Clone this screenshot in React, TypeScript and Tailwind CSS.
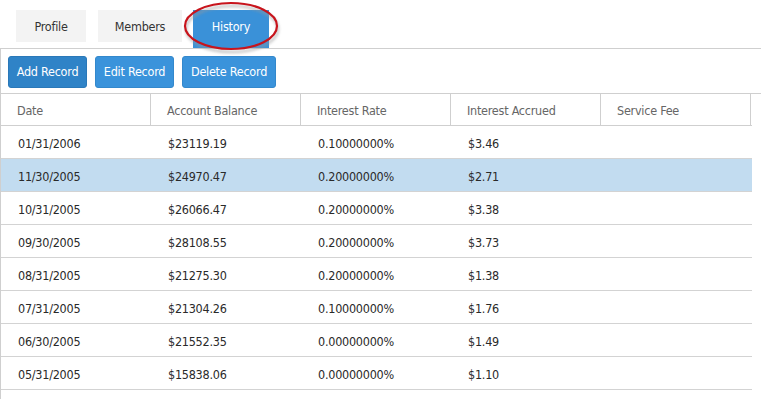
import React from "react";

const rows = [
  ["01/31/2006", "$23119.19", "0.10000000%", "$3.46"],
  ["11/30/2005", "$24970.47", "0.20000000%", "$2.71"],
  ["10/31/2005", "$26066.47", "0.20000000%", "$3.38"],
  ["09/30/2005", "$28108.55", "0.20000000%", "$3.73"],
  ["08/31/2005", "$21275.30", "0.20000000%", "$1.38"],
  ["07/31/2005", "$21304.26", "0.10000000%", "$1.76"],
  ["06/30/2005", "$21552.35", "0.00000000%", "$1.49"],
  ["05/31/2005", "$15838.06", "0.00000000%", "$1.10"],
];

const headers = ["Date", "Account Balance", "Interest Rate", "Interest Accrued", "Service Fee"];

export default function App() {
  return (
    <div
      className="relative w-[761px] h-[399px] overflow-hidden bg-white text-[12.5px] tracking-[-0.25px]"
      style={{ fontFamily: '"DejaVu Sans Condensed", "Liberation Sans", sans-serif' }}
    >
      {/* Tabs */}
      <div className="flex items-start h-[48px] pt-[10px] pl-[16px]">
        <div className="w-[70px] h-[32px] flex items-center justify-center bg-[#f3f3f3] text-[#333] pt-[2px]">Profile</div>
        <div className="ml-[12px] w-[84px] h-[32px] flex items-center justify-center bg-[#f3f3f3] text-[#333] pt-[2px]">Members</div>
        <div className="ml-[11px] w-[76px] h-[38px] flex items-center justify-center bg-[#3a91d8] text-white pb-[4px]">History</div>
      </div>

      {/* Panel */}
      <div className="border-l border-t border-[#cfcfcf] h-[351px]">
        <div className="flex gap-[8px] pl-[7px] pt-[7px] pb-[5px] border-b border-[#cfcfcf]">
          <button className="w-[79px] h-[32px] rounded-[3px] bg-[#2f83c7] border border-[#2a78b8] text-white">Add Record</button>
          <button className="w-[79px] h-[32px] rounded-[3px] bg-[#3a93db] border border-[#3388cc] text-white">Edit Record</button>
          <button className="w-[94px] h-[32px] rounded-[3px] bg-[#3a93db] border border-[#3388cc] text-white">Delete Record</button>
        </div>

        <div className="w-[751px]">
          <div className="flex h-[32px] border-b border-[#cfcfcf]">
            {headers.map((h) => (
              <div key={h} className="w-[150px] h-full border-r border-[#cfcfcf] flex items-center pl-[16px] pt-[3px] text-[#666]">
                {h}
              </div>
            ))}
          </div>
          {rows.map((r, i) => (
            <div
              key={i}
              className={`flex h-[33px] border-b border-[#d3d3d3] text-[#2a2a2a] ${i === 1 ? "bg-[#c2dcf0]" : ""}`}
            >
              {[...r, ""].map((c, j) => (
                <div key={j} className="w-[150px] h-full flex items-center pl-[17px] pt-[5px]">
                  {c}
                </div>
              ))}
            </div>
          ))}
        </div>
      </div>

      {/* Annotation ellipse */}
      <svg className="absolute left-[180px] top-0 pointer-events-none" width="104" height="56" viewBox="0 0 104 56">
        <defs>
          <filter id="sh" x="-20%" y="-20%" width="140%" height="160%">
            <feGaussianBlur stdDeviation="1.5" />
          </filter>
        </defs>
        <ellipse cx="52" cy="29" rx="46" ry="23" fill="none" stroke="#999" strokeWidth="2" filter="url(#sh)" opacity="0.7" />
        <ellipse cx="51" cy="26" rx="46" ry="23" fill="none" stroke="#c8141c" strokeWidth="2.2" />
      </svg>
    </div>
  );
}
